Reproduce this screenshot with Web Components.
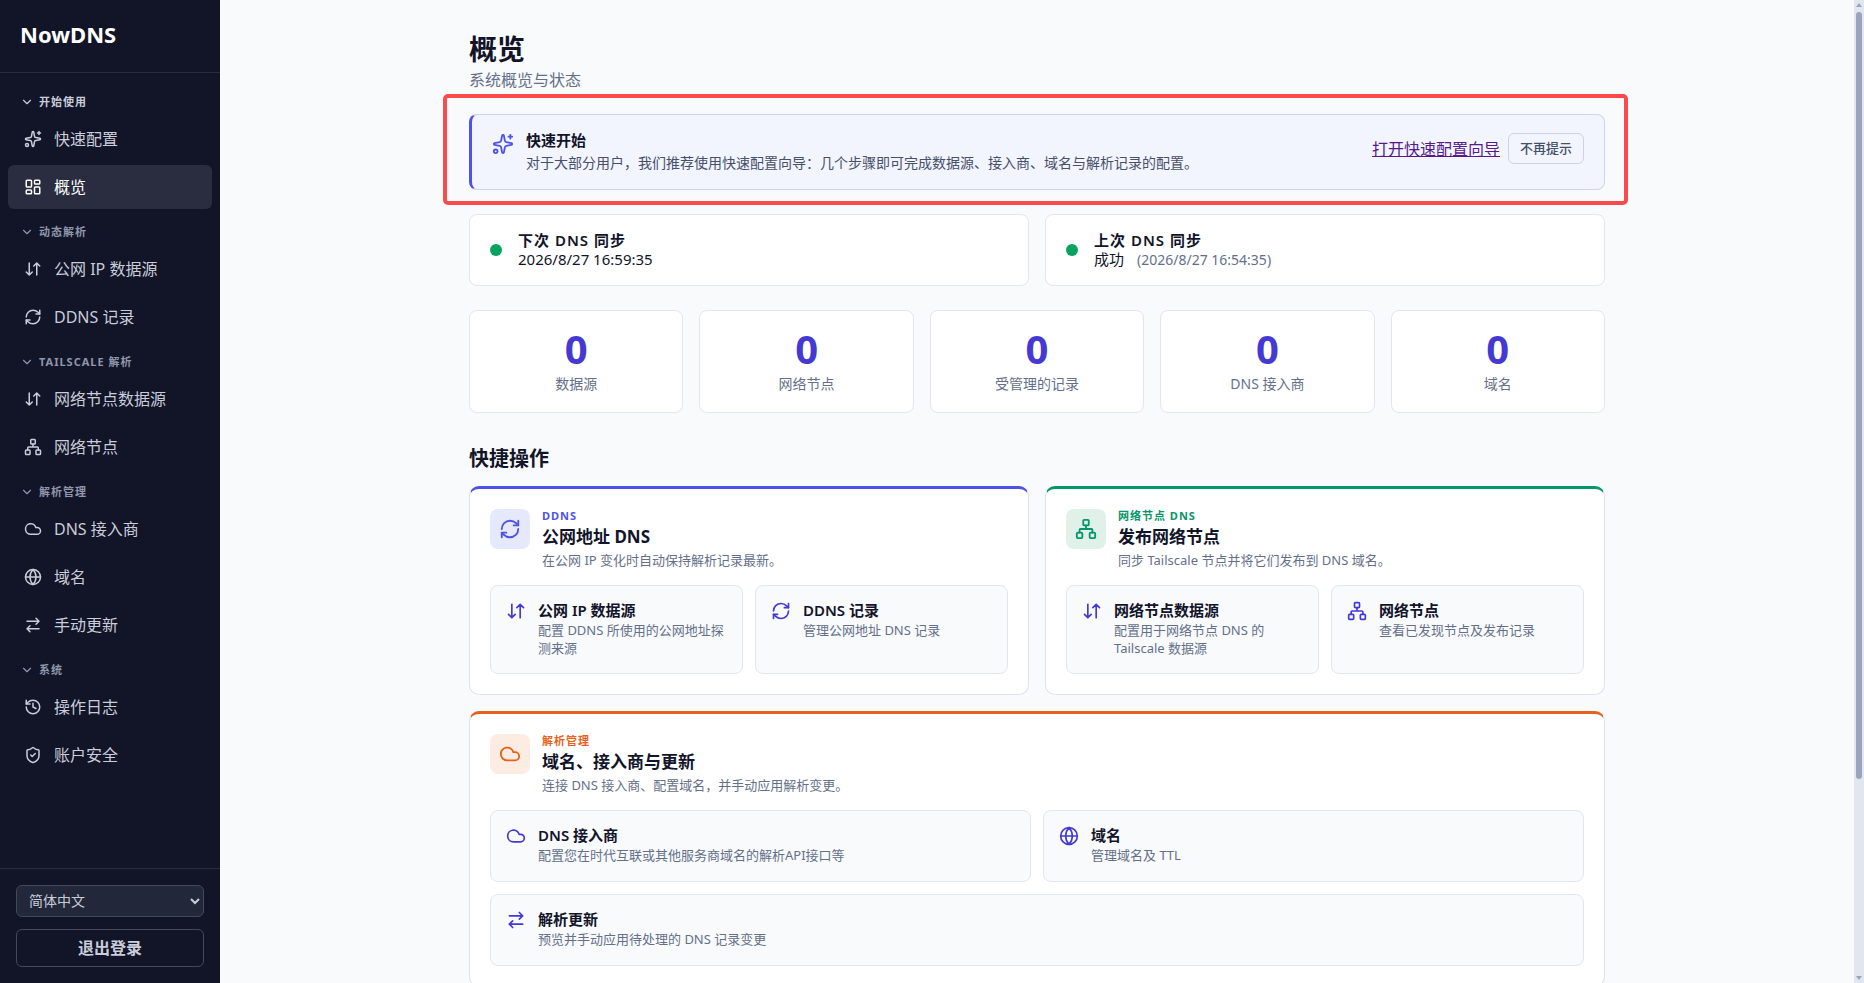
<!DOCTYPE html>
<html lang="zh-CN">
<head>
<meta charset="utf-8">
<meta name="viewport" content="width=device-width, initial-scale=1">
<title>NowDNS</title>
<style>
    :root {
        --bg: #f9fafc;
        --surface: #ffffff;
        --line: #e2e6ef;
        --text: #12142a;
        --muted: #64708a;
        --primary: #4f52e8;
        --primary-dark: #4539d4;
        --primary-soft: #e5e9fb;
        --green: #059669;
        --green-soft: #e0f1ea;
        --orange: #e8611c;
        --orange-soft: #fdece2;
        --side-bg: #121428;
        --side-line: #2a2c3f;
        --side-text: #c9cdd9;
        --side-muted: #8f97ab;
    }

    body {
        margin: 0;
        background: var(--bg);
        color: var(--text);
        font: 16px/24px "Noto Sans", "Noto Sans CJK SC", sans-serif;
    }
</style>
</head>
<body>

<dns-app>
    <dns-sidebar slot="side" brand="NowDNS">
        <nav-group label="开始使用" current>
            <nav-item icon="sparkles">快速配置</nav-item>
            <nav-item icon="dashboard" active>概览</nav-item>
        </nav-group>
        <nav-group label="动态解析">
            <nav-item icon="updown">公网 IP 数据源</nav-item>
            <nav-item icon="refresh">DDNS 记录</nav-item>
        </nav-group>
        <nav-group label="TAILSCALE 解析">
            <nav-item icon="updown">网络节点数据源</nav-item>
            <nav-item icon="network">网络节点</nav-item>
        </nav-group>
        <nav-group label="解析管理">
            <nav-item icon="cloud">DNS 接入商</nav-item>
            <nav-item icon="globe">域名</nav-item>
            <nav-item icon="swap">手动更新</nav-item>
        </nav-group>
        <nav-group label="系统">
            <nav-item icon="history">操作日志</nav-item>
            <nav-item icon="shield">账户安全</nav-item>
        </nav-group>
    </dns-sidebar>

    <page-head heading="概览">系统概览与状态</page-head>

    <quick-start heading="快速开始" link="打开快速配置向导" dismiss="不再提示">对于大部分用户，我们推荐使用快速配置向导：几个步骤即可完成数据源、接入商、域名与解析记录的配置。</quick-start>

    <card-row cols="2">
        <sync-card heading="下次 DNS 同步">2026/8/27 16:59:35</sync-card>
        <sync-card heading="上次 DNS 同步">成功<span slot="time">(2026/8/27 16:54:35)</span></sync-card>
    </card-row>

    <card-row cols="5">
        <stat-card value="0">数据源</stat-card>
        <stat-card value="0">网络节点</stat-card>
        <stat-card value="0">受管理的记录</stat-card>
        <stat-card value="0">DNS 接入商</stat-card>
        <stat-card value="0">域名</stat-card>
    </card-row>

    <action-section heading="快捷操作">
        <action-panel tone="primary" icon="refresh" eyebrow="DDNS" heading="公网地址 DNS" text="在公网 IP 变化时自动保持解析记录最新。">
            <action-card icon="updown" heading="公网 IP 数据源">配置 DDNS 所使用的公网地址探测来源</action-card>
            <action-card icon="refresh" heading="DDNS 记录">管理公网地址 DNS 记录</action-card>
        </action-panel>
        <action-panel tone="green" icon="network" eyebrow="网络节点 DNS" heading="发布网络节点" text="同步 Tailscale 节点并将它们发布到 DNS 域名。">
            <action-card icon="updown" heading="网络节点数据源">配置用于网络节点 DNS 的 Tailscale 数据源</action-card>
            <action-card icon="network" heading="网络节点">查看已发现节点及发布记录</action-card>
        </action-panel>
        <action-panel tone="orange" wide icon="cloud" eyebrow="解析管理" heading="域名、接入商与更新" text="连接 DNS 接入商、配置域名，并手动应用解析变更。">
            <action-card icon="cloud" heading="DNS 接入商">配置您在时代互联或其他服务商域名的解析API接口等</action-card>
            <action-card icon="globe" heading="域名">管理域名及 TTL</action-card>
            <action-card wide icon="swap" heading="解析更新">预览并手动应用待处理的 DNS 记录变更</action-card>
        </action-panel>
    </action-section>
</dns-app>

<script type="module">
    const ICONS = {
        chevron: `<path d="m6 9 6 6 6-6"/>`,
        sparkles: `<path d="M11.017 2.814a1 1 0 0 1 1.966 0l1.051 5.558a2 2 0 0 0 1.594 1.594l5.558 1.051a1 1 0 0 1 0 1.966l-5.558 1.051a2 2 0 0 0-1.594 1.594l-1.051 5.558a1 1 0 0 1-1.966 0l-1.051-5.558a2 2 0 0 0-1.594-1.594l-5.558-1.051a1 1 0 0 1 0-1.966l5.558-1.051a2 2 0 0 0 1.594-1.594z"/><path d="M20 2v4M22 4h-4"/><circle cx="4" cy="20" r="2"/>`,
        dashboard: `<rect x="3" y="3" width="7" height="9" rx="1"/><rect x="14" y="3" width="7" height="5" rx="1"/><rect x="14" y="12" width="7" height="9" rx="1"/><rect x="3" y="16" width="7" height="5" rx="1"/>`,
        updown: `<path d="m3 16 4 4 4-4M7 20V4M21 8l-4-4-4 4M17 4v16"/>`,
        refresh: `<path d="M3 12a9 9 0 0 1 9-9 9.75 9.75 0 0 1 6.74 2.74L21 8"/><path d="M21 3v5h-5"/><path d="M21 12a9 9 0 0 1-9 9 9.75 9.75 0 0 1-6.74-2.74L3 16"/><path d="M8 16H3v5"/>`,
        network: `<rect x="16" y="16" width="6" height="6" rx="1"/><rect x="2" y="16" width="6" height="6" rx="1"/><rect x="9" y="2" width="6" height="6" rx="1"/><path d="M5 16v-3a1 1 0 0 1 1-1h12a1 1 0 0 1 1 1v3M12 12V8"/>`,
        cloud: `<path d="M17.5 19H9a7 7 0 1 1 6.71-9h1.79a4.5 4.5 0 1 1 0 9Z"/>`,
        globe: `<circle cx="12" cy="12" r="10"/><path d="M12 2a14.5 14.5 0 0 0 0 20 14.5 14.5 0 0 0 0-20M2 12h20"/>`,
        swap: `<path d="m16 3 4 4-4 4M20 7H4M8 21l-4-4 4-4M4 17h16"/>`,
        history: `<path d="M3 12a9 9 0 1 0 9-9 9.75 9.75 0 0 0-6.74 2.74L3 8"/><path d="M3 3v5h5M12 7v5l4 2"/>`,
        shield: `<path d="M20 13c0 5-3.5 7.5-7.66 8.95a1 1 0 0 1-.67-.01C7.5 20.5 4 18 4 13V6a1 1 0 0 1 1-1c2 0 4.5-1.2 6.24-2.72a1.17 1.17 0 0 1 1.52 0C14.51 3.81 17 5 19 5a1 1 0 0 1 1 1z"/><path d="m9 12 2 2 4-4"/>`,
    };

    // registers an element whose shadow root is css + html(attribute getter)
    const define = (name, css, html) => {
        customElements.define(name, class extends HTMLElement {
            constructor() {
                super();
                const attr = (key) => this.getAttribute(key) ?? "";
                this.attachShadow({ mode: "open" }).innerHTML = `
                    <style>
                        *, *::before, *::after { box-sizing: border-box; }
                        :host { box-sizing: border-box; display: block; }
                        h1, h2, h3, h4, p { margin: 0; }
                        ${css}
                    </style>
                    ${html(attr)}`;
            }
        });
    };

    define("line-icon", `
        :host { flex: none; width: var(--icon-size, 20px); height: var(--icon-size, 20px); }
        svg {
            display: block;
            width: 100%;
            height: 100%;
            fill: none;
            stroke: currentColor;
            stroke-width: 2;
            stroke-linecap: round;
            stroke-linejoin: round;
        }
    `, (attr) => `<svg viewBox="0 0 24 24" aria-hidden="true">${ICONS[attr("name")]}</svg>`);

    define("scroll-rail", `
        :host {
            display: flex;
            flex-direction: column;
            align-items: center;
            gap: 5px;
            width: 10px;
            padding: 3px 0;
            background: var(--line);
        }
        .up, .down { border: solid 3px transparent; border-top-width: 0; border-bottom: solid 4px #9aa4bb; }
        .down { transform: rotate(180deg); }
        .track { flex: 1; width: 6px; }
        .thumb { height: 80%; border-radius: 3px; background: #9aa4bb; }
    `, () => `
        <div class="up"></div>
        <div class="track"><div class="thumb"></div></div>
        <div class="down"></div>
    `);

    define("dns-app", `
        :host {
            display: grid;
            grid-template-columns: 220px minmax(0, 1fr) auto;
            height: 100vh;
        }
        main { overflow: hidden auto; scrollbar-width: none; }
        .content {
            max-width: 1200px;
            margin: 0 auto;
            padding: 32px;
            display: flex;
            flex-direction: column;
            gap: 24px;
        }
    `, () => `
        <slot name="side"></slot>
        <main><div class="content"><slot></slot></div></main>
        <scroll-rail></scroll-rail>
    `);

    define("dns-sidebar", `
        :host {
            display: flex;
            flex-direction: column;
            min-height: 0;
            background: var(--side-bg);
            color: var(--side-text);
        }
        .brand {
            padding: 18px 20px 22px;
            border-bottom: 1px solid var(--side-line);
            color: #fff;
            font-size: 22px;
            font-weight: 700;
            line-height: 32px;
        }
        nav {
            flex: 1;
            min-height: 0;
            overflow: hidden;
            padding: 14px 8px;
            display: flex;
            flex-direction: column;
            gap: 8px;
        }
        .foot {
            display: flex;
            flex-direction: column;
            gap: 12px;
            padding: 16px;
            border-top: 1px solid var(--side-line);
        }
        select, button {
            width: 100%;
            border: 1px solid #454859;
            border-radius: 6px;
            color: inherit;
            font-family: inherit;
        }
        select {
            height: 32px;
            padding: 0 8px 2px;
            background: #22283a;
            font-size: 14px;
        }
        button {
            height: 38px;
            padding: 0 0 2px;
            background: transparent;
            font-size: 16px;
            font-weight: 600;
        }
    `, (attr) => `
        <div class="brand">${attr("brand")}</div>
        <nav><slot></slot></nav>
        <div class="foot">
            <select aria-label="语言"><option>简体中文</option></select>
            <button type="button">退出登录</button>
        </div>
    `);

    define("nav-group", `
        :host { display: flex; flex-direction: column; gap: 4px; }
        button {
            display: flex;
            align-items: center;
            gap: 5px;
            height: 30px;
            margin-bottom: -4px;
            padding: 0 12px;
            border: 0;
            background: none;
            color: var(--side-muted);
            font: inherit;
            font-size: 11px;
            font-weight: 700;
            letter-spacing: 1px;
        }
        :host([current]) button { color: var(--side-text); }
        line-icon { --icon-size: 14px; }
    `, (attr) => `
        <button type="button" aria-expanded="true"><line-icon name="chevron"></line-icon>${attr("label")}</button>
        <slot></slot>
    `);

    define("nav-item", `
        a {
            display: flex;
            align-items: center;
            gap: 12px;
            height: 44px;
            padding: 0 16px;
            border-radius: 6px;
            color: inherit;
            text-decoration: none;
        }
        :host([active]) a { background: #2a2c3f; color: #fff; }
        line-icon { --icon-size: 18px; }
    `, (attr) => `<a href="#"><line-icon name="${attr("icon")}"></line-icon><span><slot></slot></span></a>`);

    define("page-head", `
        :host { margin-bottom: -2px; }
        h1 { font-size: 28px; line-height: 34px; font-weight: 700; }
        p { margin-top: 2px; color: var(--muted); }
    `, (attr) => `<h1>${attr("heading")}</h1><p><slot></slot></p>`);

    define("quick-start", `
        :host {
            position: relative;
            display: flex;
            align-items: flex-start;
            gap: 12px;
            padding: 15px 20px;
            border: 1px solid #c9d4f6;
            border-left: 3px solid var(--primary);
            border-radius: 8px;
            background: #f2f4fe;
        }
        /* red frame round the whole callout */
        :host::after {
            content: "";
            position: absolute;
            inset: -21px -24px -16px -29px;
            border: 4px solid #f94b4b;
            border-radius: 5px;
            pointer-events: none;
        }
        line-icon { --icon-size: 22px; margin-top: 3px; color: var(--primary); }
        .text { flex: 1; line-height: 22px; }
        h2 { font-size: 15px; line-height: 20px; font-weight: 600; }
        p { margin-top: 2px; font-size: 14px; color: #475069; }
        .actions { display: flex; align-items: center; gap: 8px; margin-top: 3px; }
        a { color: #551a8b; }
        button {
            height: 31px;
            padding: 0 11px 2px;
            border: 1px solid #cdd3e2;
            border-radius: 6px;
            background: transparent;
            color: #475069;
            font: inherit;
            font-size: 13px;
            font-weight: 500;
        }
    `, (attr) => `
        <line-icon name="sparkles"></line-icon>
        <div class="text"><h2>${attr("heading")}</h2><p><slot></slot></p></div>
        <div class="actions">
            <a href="#">${attr("link")}</a>
            <button type="button">${attr("dismiss")}</button>
        </div>
    `);

    define("card-row", `
        :host { display: grid; gap: 16px; }
        :host([cols="2"]) { grid-template-columns: repeat(2, minmax(0, 1fr)); }
        :host([cols="5"]) { grid-template-columns: repeat(5, minmax(0, 1fr)); }
    `, () => `<slot></slot>`);

    define("sync-card", `
        :host {
            display: flex;
            align-items: center;
            gap: 16px;
            padding: 16px 20px;
            border: 1px solid var(--line);
            border-radius: 8px;
            background: var(--surface);
            line-height: 19px;
        }
        .dot { width: 12px; height: 12px; border-radius: 50%; background: #05a35d; }
        h2 { font-size: 15px; line-height: 19px; font-weight: 600; letter-spacing: 1px; }
        p { display: flex; gap: 13px; font-size: 15px; }
        ::slotted([slot="time"]) { color: var(--muted); font-size: 14px; }
    `, (attr) => `
        <div class="dot"></div>
        <div><h2>${attr("heading")}</h2><p><slot></slot><slot name="time"></slot></p></div>
    `);

    define("stat-card", `
        :host {
            padding: 18px;
            border: 1px solid var(--line);
            border-radius: 8px;
            background: var(--surface);
            text-align: center;
        }
        .value { color: var(--primary-dark); font-size: 40px; line-height: 40px; font-weight: 700; }
        .label { margin-top: 4px; color: var(--muted); font-size: 14px; line-height: 21px; }
    `, (attr) => `<div class="value">${attr("value")}</div><div class="label"><slot></slot></div>`);

    define("action-section", `
        :host { margin-top: 8px; }
        h2 { margin-bottom: 13px; font-size: 20px; line-height: 28px; font-weight: 700; }
        .grid { display: grid; grid-template-columns: repeat(2, minmax(0, 1fr)); gap: 16px; }
    `, (attr) => `<h2>${attr("heading")}</h2><div class="grid"><slot></slot></div>`);

    define("action-panel", `
        :host {
            --tone: var(--primary);
            --tone-soft: var(--primary-soft);
            padding: 20px;
            border: 1px solid #dce2ee;
            border-top: 3px solid var(--tone);
            border-radius: 10px;
            background: var(--surface);
        }
        :host([tone="green"]) { --tone: var(--green); --tone-soft: var(--green-soft); }
        :host([tone="orange"]) { --tone: var(--orange); --tone-soft: var(--orange-soft); }
        :host([wide]) { grid-column: 1 / -1; }
        header { display: flex; align-items: flex-start; gap: 12px; margin-bottom: 14px; }
        .badge {
            display: grid;
            place-items: center;
            width: 40px;
            height: 40px;
            border-radius: 8px;
            background: var(--tone-soft);
            color: var(--tone);
            --icon-size: 22px;
        }
        .eyebrow { margin-bottom: 2px; color: var(--tone); font-size: 11px; line-height: 14px; font-weight: 700; letter-spacing: 1px; }
        h3 { font-size: 17px; line-height: 24px; font-weight: 700; }
        .desc { color: var(--muted); font-size: 13px; line-height: 22px; }
        .cards { display: grid; grid-template-columns: repeat(2, minmax(0, 1fr)); gap: 12px; }
    `, (attr) => `
        <header>
            <div class="badge"><line-icon name="${attr("icon")}"></line-icon></div>
            <div>
                <p class="eyebrow">${attr("eyebrow")}</p>
                <h3>${attr("heading")}</h3>
                <p class="desc">${attr("text")}</p>
            </div>
        </header>
        <div class="cards"><slot></slot></div>
    `);

    define("action-card", `
        :host { display: grid; min-height: 72px; }
        :host([wide]) { grid-column: 1 / -1; }
        a {
            display: flex;
            align-items: flex-start;
            gap: 12px;
            padding: 15px 15px 16px;
            border: 1px solid var(--line);
            border-radius: 8px;
            background: var(--bg);
            color: inherit;
            text-decoration: none;
        }
        line-icon { color: var(--primary-dark); }
        h4 { margin-bottom: 1px; font-size: 15px; line-height: 19px; font-weight: 600; }
        p { color: var(--muted); font-size: 13px; line-height: 18px; }
    `, (attr) => `
        <a href="#">
            <line-icon name="${attr("icon")}"></line-icon>
            <div><h4>${attr("heading")}</h4><p><slot></slot></p></div>
        </a>
    `);
</script>
</body>
</html>
